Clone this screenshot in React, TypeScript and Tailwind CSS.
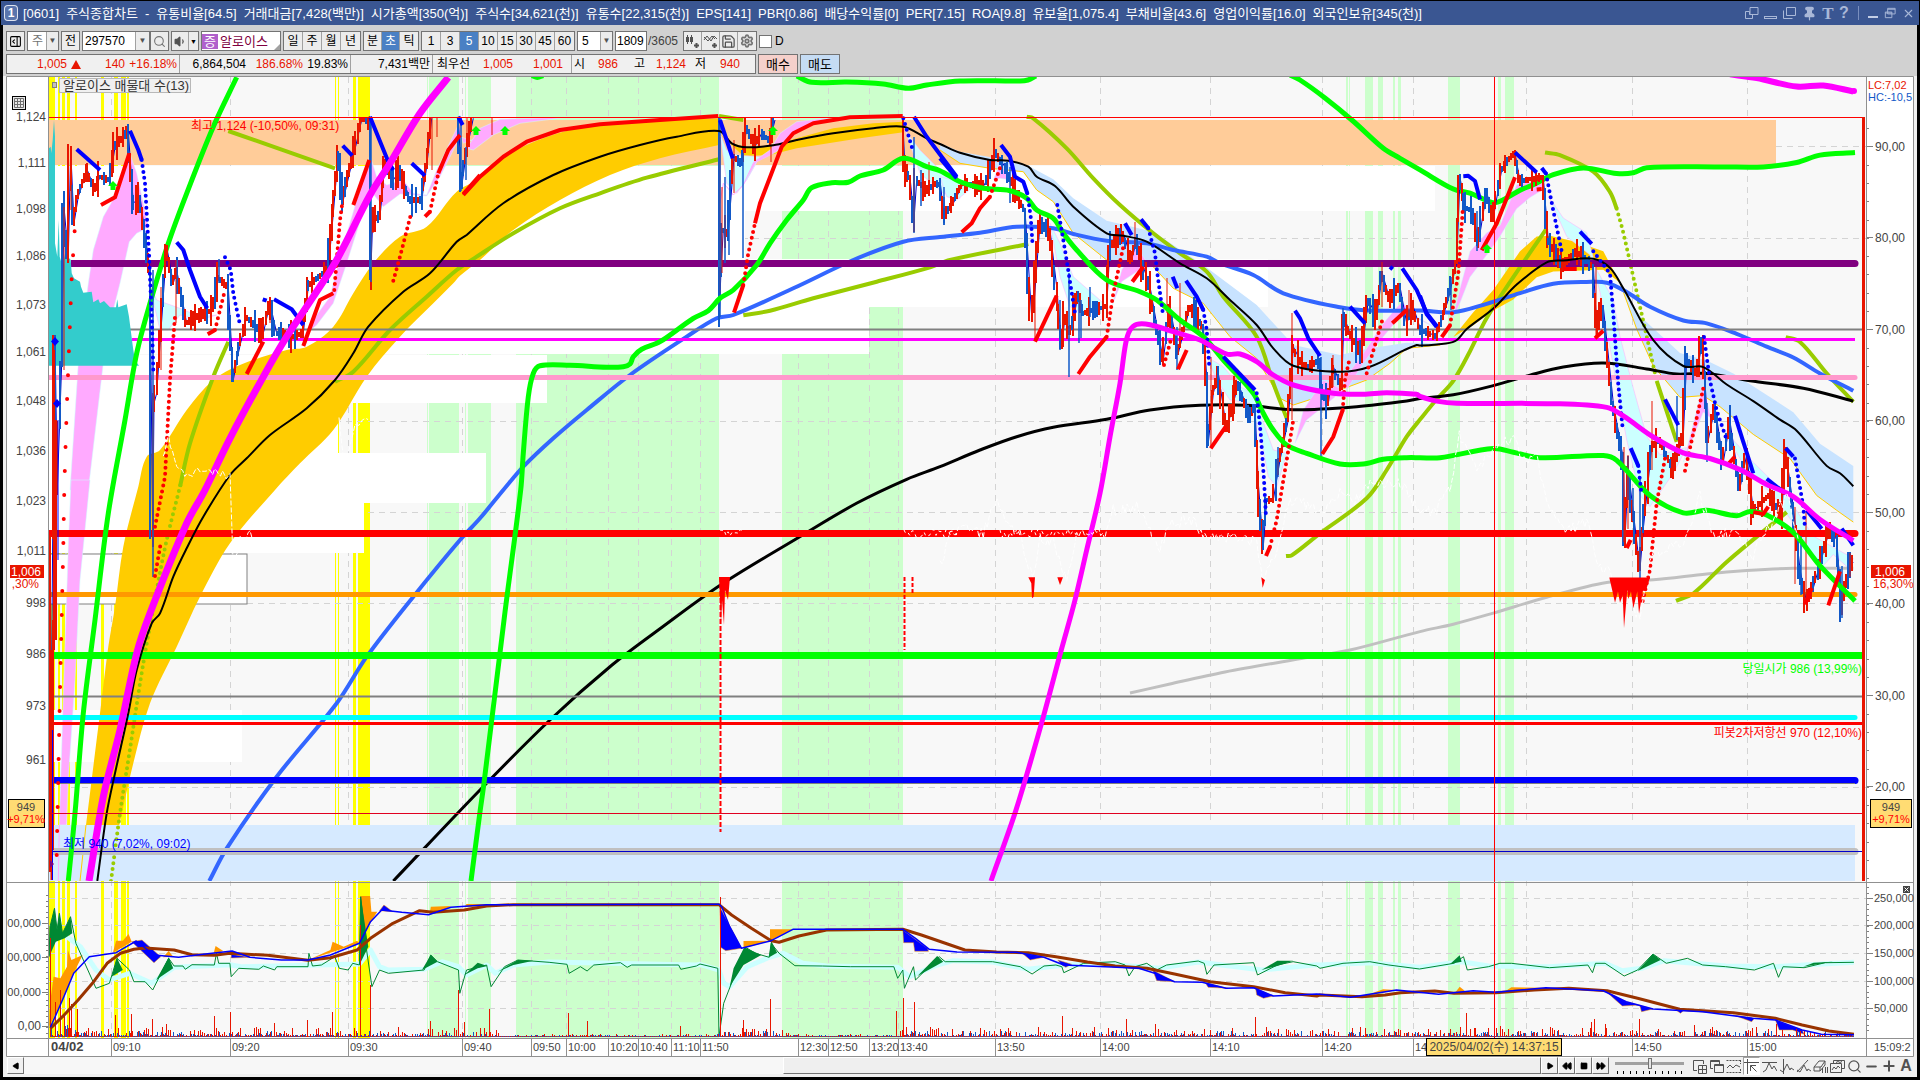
import type { ReactNode } from 'react';
import { Search, Volume1, Save, Settings, Pin, Minus, X, Plus, PanelRightOpen, Play, Rewind, FastForward, Square } from 'lucide-react';

type Tile = [number, number, number, number];

// origin x, origin y, units per px across, units per px down
const Z: Tile = [0, 0, 1, 1];
const A: Tile = [0, 70, 3, 3];
const B: Tile = [0, 480, 3, 3];
const C: Tile = [460, 70, 3, 3];
const D: Tile = [940, 100, 3, 3];
const E: Tile = [1420, 70, 3, 2.703];
const F: Tile = [0, 870, 2.24, 3];
const G: Tile = [700, 870, 2.529, 3];
const H: Tile = [1320, 800, 2.613, 3];

function nums(t: Tile, s: string) {
  return s.trim().split(' ').map((pair) => {
    const [x, y] = pair.split(',').map(Number);
    return [t[0] + x / t[2], t[1] + y / t[3]];
  });
}

function p(t: Tile, s: string) {
  return nums(t, s).map(([x, y]) => `${x.toFixed(1)},${y.toFixed(1)}`).join(' ') + ' ';
}

function random(seed: number) {
  let s = seed;
  return () => {
    s = (s * 16807) % 2147483647;
    return s / 2147483647;
  };
}

// curve through all points, handles scaled by the length of each segment
function smooth(d: string) {
  const pts = nums(Z, d);
  const dir = pts.map((_, i) => {
    const [ax, ay] = pts[Math.max(0, i - 1)];
    const [bx, by] = pts[Math.min(pts.length - 1, i + 1)];
    const len = Math.hypot(bx - ax, by - ay) || 1;
    return [(bx - ax) / len, (by - ay) / len];
  });
  let path = `M${pts[0][0]} ${pts[0][1]}`;
  for (let i = 1; i < pts.length; i++) {
    const [ax, ay] = pts[i - 1];
    const [bx, by] = pts[i];
    const k = Math.hypot(bx - ax, by - ay) / 3;
    const c = [ax + dir[i - 1][0] * k, ay + dir[i - 1][1] * k, bx - dir[i][0] * k, by - dir[i][1] * k, bx, by];
    path += `C${c.map((n) => n.toFixed(1)).join(' ')}`;
  }
  return path;
}

function Line({ d, c, w = 1, dash }: { d: string; c: string; w?: number; dash?: string }) {
  return (
    <polyline points={d} fill="none" stroke={c} strokeWidth={w} strokeDasharray={dash} strokeLinecap={dash === '0 6' || dash === '0 24' ? 'round' : 'butt'} strokeLinejoin="round" />
  );
}

function Curve({ d, c, w = 1, dash }: { d: string; c: string; w?: number; dash?: string }) {
  return <path d={smooth(d)} fill="none" stroke={c} strokeWidth={w} strokeDasharray={dash} strokeLinecap={dash ? 'round' : 'butt'} />;
}

const bands = {
  yellow: [[49, 6], [58, 2], [62, 3], [67, 3], [75, 2], [101, 3], [114, 4], [121, 5], [127, 2], [335, 1], [338, 1], [353, 3], [358, 12]],
  green: [[427, 1], [429, 30], [465, 1], [468, 23], [516, 203], [782, 121], [1346, 2], [1349, 1], [1365, 8], [1378, 5], [1393, 2], [1398, 3], [1448, 12], [1498, 3], [1505, 9]],
};

const profile = [[166, 45, 1386], [211, 48, 696], [259, 48, 1219], [307, 47, 820], [355, 48, 498], [403, 50, 289], [453, 50, 437], [503, 50, 315], [710, 52, 193]];

const times: [number, string][] = [
  [111, '09:10'], [230, '09:20'], [348, '09:30'], [462, '09:40'], [531, '09:50'], [566, '10:00'], [608, '10:20'],
  [638, '10:40'], [671, '11:10'], [700, '11:50'], [798, '12:30'], [828, '12:50'], [869, '13:20'], [898, '13:40'],
  [995, '13:50'], [1100, '14:00'], [1210, '14:10'], [1322, '14:20'], [1413, '14'], [1526, ''], [1632, '14:50'], [1747, '15:00'],
];

const prices: [number, string][] = [
  [117, '1,124'], [163, '1,111'], [209, '1,098'], [256, '1,086'], [305, '1,073'], [352, '1,061'], [401, '1,048'],
  [451, '1,036'], [501, '1,023'], [551, '1,011'], [603, '998'], [654, '986'], [706, '973'], [760, '961'],
];

const scores: [number, string][] = [
  [146, '90,00'], [237, '80,00'], [329, '70,00'], [420, '60,00'], [512, '50,00'], [603, '40,00'], [695, '30,00'], [786, '20,00'],
];

const levels: [number, string, number, number, number][] = [
  [263, '#800080', 7, 71, 1855], [329, '#808080', 2, 130, 1863], [339, '#ff00ff', 3, 132, 1855], [377, '#ff99cc', 5, 49, 1855],
  [533, '#ff0000', 7, 49, 1855], [594, '#ff9900', 5, 49, 1855], [655, '#00ff00', 7, 49, 1862], [696, '#808080', 2, 49, 1863],
  [717, '#00ffff', 5, 49, 1855], [723, '#ff0000', 3, 49, 1862], [780, '#0000ff', 7, 49, 1855], [783, '#808080', 1, 49, 1855],
  [851, '#c0c0c0', 7, 53, 1855],
];

const pinkClouds = [
  p(A, '210,1260 235,880 265,640 280,540 310,440 350,370 388,245 410,310 430,400 445,470 430,480 410,490 388,515 360,640 340,720 310,880 265,1260'),
  p(B, '213,0 270,0 240,300 225,600 205,900 200,1035 178,1035 190,650 205,200'),
  p(A, '920,790 950,735 990,680 1020,560 1110,255 1130,320 1160,345 1210,330 1240,370 1280,375 1310,300 1375,165 1390,220 1440,200 1440,220 1380,200 1320,320 1280,378 1200,372 1150,410 1110,360 1040,580 1000,700 950,765'),
  p(C, '20,235 60,175 120,148 320,142 180,160 100,195 40,240'),
  p(C, '860,330 880,275 930,240 960,190 1010,155 1110,143 1050,160 1000,195 950,245 890,275'),
  p(D, '515,620 545,510 590,440 630,500 590,515 545,545'),
  p(D, '1065,1030 1090,930 1150,840 1210,870 1150,920 1100,960'),
  p(D, '1210,840 1270,760 1330,670 1385,605 1430,650 1500,690 1440,660 1385,645 1330,710 1270,790 1220,870'),
  p(E, '95,680 120,590 150,490 200,440 240,420 290,310 360,295 375,320 330,345 290,375 240,450 200,500 150,560 120,630'),
  p(E, '790,1060 830,920 850,850 870,930 900,960 850,925'),
  p(D, '160,240 180,190 210,240 180,235'),
];

const cyanClouds = [
  p(A, '447,640 470,690 540,715 600,740 650,735 600,750 540,735 505,780 480,780'),
  p(C, '780,190 800,240 830,255 900,260 860,330 830,370 800,340'),
  p(C, '1335,180 1380,240 1440,300 1500,335 1500,385 1450,370 1380,310'),
  p(D, '0,230 60,245 100,260 50,300 20,290'),
  p(D, '330,370 360,430 400,530 480,600 500,620 430,640 390,620 360,530'),
  p(D, '800,770 850,800 900,860 940,880 960,940 1000,1050 1040,1060 1010,1160 985,1130 960,1000 930,910 870,900 830,840'),
  p(E, '385,340 430,400 500,440 530,540 580,620 600,720 640,860 680,990 720,1040 800,1020 760,1090 690,1180 660,1150 620,1000 580,800 540,600 510,500 440,450'),
  p(E, '900,960 1000,1060 1100,1150 1180,1260 1260,1300 1300,1320 1290,1350 1240,1310 1200,1350 1140,1250 1060,1150 980,1080'),
];

const goldUpper = p(B, '258,1035 300,700 325,500 345,380 370,200 415,20') +
  p(A, '440,1160 480,1140 560,1020 640,930 720,885 860,840 920,830 1000,770 1060,670 1120,580 1200,500 1280,470 1370,365 1440,325') +
  p(C, '100,280 200,225 330,180 500,155 777,145');
const goldLower = p(C, '777,225 600,265 450,315 300,390 160,480 60,570 0,617') +
  p(A, '1360,640 1300,700 1200,800 1100,920 1000,1080 900,1180 825,1260') +
  p(B, '690,190 600,350 530,500 450,670 400,850 358,1035');
const goldClouds = [
  p(C, '777,190 815,220 860,232 940,226 1010,205 1120,175 1240,160 1330,155 1330,187 1200,205 1010,235 930,255 850,258'),
  p(E, '100,722 160,655 220,595 300,490 350,450 390,448 470,465 550,490 600,575 550,540 400,545 350,560 280,620 220,650 160,690'),
];

const skyUpper = '0,130 60,155 200,180 270,200 340,238 400,295 500,362 640,395 790,495 950,615 1060,735 1200,765 1290,745 1400,728 1500,730 ';
const skyLower = '1500,735 1400,745 1350,790 1280,840 1200,870 1060,915 1020,895 950,775 870,710 790,610 700,565 630,490 500,480 400,400 340,305 290,270 250,215 150,205 60,190 0,150';
const skyLowerRight = '1300,1222 1250,1190 1190,1150 1110,1050 1000,985 900,910 850,880 780,885 700,800 650,700 600,575';

const green1 = p(B, '205,1203 225,1000 250,700 285,420 325,100') + p(A, '375,1050 410,850 450,700 505,520 560,370 640,170 710,22');
const green2 = p(C, '1010,18 1055,37 1160,36 1270,42 1345,55 1400,45 1500,33') + p(Z, '1020,81 1028,80 1036,76');
const green3 = p(Z, '1290,75 1300,80 1325,98 1353,121') + p(D, '1330,145 1380,175') + p(E, '0,270 100,322 150,333 215,358 240,355 300,325 340,310 400,283 490,265 590,280 640,278 680,264 900,262 1030,262 1130,250 1200,230 1305,223');
const green4 = p(B, '1413,1203 1440,995') + p(Z, '484,783 505,612') +
  p(C, '182,1260 190,1150 205,980 220,910 240,887 330,886 440,892 490,890 510,882 520,860 545,838 600,815 700,745 745,722 780,685 820,660 890,585 930,520 980,450 1030,390 1055,353 1115,338 1165,337 1200,318 1270,300 1330,265 1400,290') +
  p(D, '0,212 60,245 130,265 210,272 260,295 290,330 340,355 370,400 410,450 500,540 600,575 650,600 720,660 790,710 850,780 940,880 970,940 1000,990 1040,1035 1100,1060 1200,1092 1270,1092 1330,1078 1400,1073') +
  p(E, '0,1048 60,1048 220,1023 280,1033 360,1048 550,1042 590,1055 690,1150 790,1197 860,1190 950,1205 990,1193 1040,1203 1120,1250 1200,1340 1305,1435');

const black1 = p(B, '292,1203 320,1000 345,880 385,700 410,570 455,430 480,400 520,290 560,205 610,110') +
  p(A, '690,1215 740,1165 810,1095 920,1015 1005,930 1060,850 1105,770 1210,665 1290,610 1370,515 1400,495') +
  p(C, '20,495 130,400 280,315 420,260 540,225 650,200 777,183 815,220 860,232 940,226 1010,210 1120,190 1240,175 1330,170 1400,205') +
  p(D, '0,132 60,158 150,180 205,182 265,200 290,230 345,258 400,320 500,400 550,407 620,425 720,490 800,535 870,600 950,675 1000,745 1060,797 1200,815 1290,800 1390,752 1430,735') +
  p(E, '0,745 50,742 105,733 140,700 220,645 290,580 380,520 430,515 520,510 570,535 610,590 700,730 790,800 850,803 920,850 1000,895 1080,945 1130,975 1220,1070 1260,1090 1300,1125');
const black2 = p(B, '1180,1203 1440,930') + p(Z, '551,719 612,665 661,628 722,584 796,539 857,503') + p(C, '1340,1228') +
  p(D, '0,1100 120,1050 230,1010 340,982 500,958 630,930 780,916 920,916 1060,929 1250,920 1400,903') +
  p(E, '0,888 100,878 220,853 330,825 430,803 550,792 680,808 770,822 860,820 990,840 1150,860 1300,895');
const blueCurve = p(B, '628,1203 680,1105 830,890 1010,670 1100,530 1240,350 1380,180 1440,115') +
  p(C, '130,1260 190,1190 280,1105 380,1020 510,915 680,800 770,745 820,735 1000,655 1180,570 1330,515') +
  p(D, '0,411 120,398 230,380 340,385 400,402 500,422 620,430 700,450 800,470 840,490 940,525 1030,580 1200,622 1300,632') +
  p(E, '0,650 100,655 200,632 300,603 400,578 500,573 560,575 620,600 690,640 790,677 860,685 950,713 1040,748 1120,777 1200,820 1300,867');
const magenta1 = p(B, '267,1203 310,950 360,750 410,520 450,400 560,130') + p(A, '615,1260 690,1105 790,920 860,800 940,680 1010,570 1110,375 1170,280 1260,130 1345,22');
const magenta2 = p(Z, '991,881 1016,810 1041,725 1061,651') +
  p(D, '405,1500 440,1350 480,1180 510,1010 540,850 557,730 570,690 590,673 630,674 700,695 780,720 860,762 900,762 950,785 1000,825 1060,855 1180,880 1270,883 1340,878 1430,883') +
  p(E, '0,882 50,895 110,901 400,902 560,912 610,935 700,992 790,1035 870,1050 960,1080 1040,1120 1120,1153 1200,1215 1300,1272');
const silver = p(Z, '1130,693 1170,684 1225,672 1298,659 1350,650') + p(E, '0,1518 100,1498 220,1468 380,1425 560,1385 700,1378 860,1362 980,1353 1120,1347 1300,1347');

const olive = [
  p(A, '685,183 1005,295'),
  p(A, '540,1250 570,1120 640,920 685,815'),
  p(A, '1005,935 1060,905 1170,780 1280,680 1370,600') + p(C, '50,560 160,490 300,415 420,370 560,323 777,268'),
  p(C, '777,138 850,150'),
  p(C, '850,736 930,722 1060,685 1250,635 1410,592') + p(D, '30,480 265,432'),
  p(D, '260,50 280,55 380,145 460,235 540,315 640,400 720,460 800,515 850,590 950,710 1000,850 1040,955'),
  p(D, '1038,1368 1055,1366 1140,1300 1280,1195 1340,1110 1400,1010') + p(E, '0,945 50,890 100,840 150,760 200,670 280,560 380,428'),
  p(E, '375,223 420,230 520,275 570,330 590,375'),
  p(E, '710,840 770,1005'),
  p(E, '768,1435 820,1415 920,1330 1100,1195'),
  p(E, '1097,722 1140,735 1220,820 1300,897'),
];
const oliveDots = [p(B, '333,1203 360,1000 385,840 430,550 470,330 500,180 545,0'), p(E, '590,375 610,440 650,600 710,840')];

const blueRuns: [Tile, string[]][] = [
  [A, ['230,238 300,300', '390,182 415,240 425,270', '530,517 550,540 570,600 600,680 622,715', '788,688 800,692', '822,688 875,718 910,765', '1028,227 1057,257', '1110,140 1165,275 1180,300', '1235,280 1275,317', '1375,140 1388,165']],
  [C, ['780,150 818,265', '1362,140 1400,200 1490,320']],
  [D, ['0,175 50,235', '183,135 210,170 225,230 250,245 262,280', '555,370 575,405', '603,358 625,385', '698,530 712,565', '738,542 770,590 790,630', '850,770 945,870', '1065,632 1080,655 1105,715 1140,768', '1230,620 1275,670', '1350,500 1358,508', '1387,505 1430,570 1460,640 1490,678']],
  [E, ['0,610 20,660 50,695', '130,287 145,286 165,300 180,350', '285,223 350,277', '365,265 378,280', '480,437 515,470', '632,1022 655,1070', '735,890 775,960', '945,935 1000,1090', '1040,1105 1090,1140', '1097,1022 1120,1045', '1160,1190 1205,1240', '1265,1240 1300,1285']],
];
const blueDots: [Tile, string[]][] = [
  [A, ['425,270 435,340 440,430 447,550 455,740 460,900', '675,562 692,600 700,670 720,765']],
  [C, ['1330,145 1358,240']],
  [D, ['262,280 272,350 278,440', '352,315 375,450 405,640', '625,385 645,460 652,520 670,650', '790,630 800,690 808,800', '950,880 962,1000 972,1140 978,1250']],
  [E, ['378,280 400,380 425,490', '520,490 570,550 580,660 595,850 608,970', '655,1070 665,1150', '852,722 870,840 890,920 920,1000', '1125,1050 1150,1180 1155,1240']],
];
const redRuns: [Tile, string[]][] = [
  [A, ['303,405 345,382 388,250', '623,793 645,780', '740,912 790,815', '910,828 960,690 1000,670', '1060,405 1108,270', '1275,440 1290,425', '1315,310 1345,240 1380,195', '1390,372 1440,315']],
  [C, ['10,375 60,320 130,260 200,215 300,180 420,163 600,150 775,138', '822,728 850,645', '885,460 900,400 965,230 1000,190 1060,160 1170,142 1328,138']],
  [D, ['65,397 95,370 120,325 150,290', '285,725 350,587', '415,822 450,770 500,710', '577,545 610,500', '714,808 740,750', '812,1045 857,980', '978,1368 990,1340', '1147,1062 1180,1010 1208,930', '1357,670 1400,630']],
  [E, ['65,722 90,690', '185,487 230,415 285,290', '350,323 365,322', '430,538 470,538', '525,725 550,705', '620,1292 632,1270', '925,1065 945,1045', '1225,1447 1260,1355', '1000,1195 1030,1200 1045,1180', '1155,1445 1175,1400']],
];
const redDots: [Tile, string[]][] = [
  [A, ['465,1370 495,1220 510,930 525,740', '645,780 675,660', '1003,660 1020,450 1027,400', '1180,632 1200,560 1232,435', '1290,425 1315,310']],
  [B, ['465,288 482,190']],
  [C, ['850,645 865,550 885,460']],
  [D, ['150,290 183,195', '500,710 520,580 550,440', '672,795 695,710', '990,1340 1010,1260 1040,1080 1060,960', '1208,930 1215,840 1230,770', '1280,820 1330,650']],
  [E, ['90,690 115,550 128,380', '668,1435 690,1350 710,1170 735,1050', '795,1083 850,860']],
];

const trades: [Tile, string][] = [
  [A, '150,2400 158,1400 165,800 172,1260 185,880 192,410 205,560 212,240 222,460 235,380 262,300 285,360 300,320 330,330 345,230 385,185 400,400 420,380 450,600 458,1400 462,1000 470,970 500,530 520,640 530,600 560,760 590,740 640,720 655,620 685,650 700,930 715,850 740,740 790,790 810,700 830,790 880,800 910,790 925,650 960,620 985,600 1000,430 1015,250 1030,390 1060,260 1085,150 1110,140 1112,620 1118,450 1140,440 1155,280 1180,330 1200,300 1230,390 1265,390 1280,290 1295,145'],
  [A, '1375,140 1385,350 1400,240 1420,145'],
  [C, '777,142 778,740 783,600 790,480 805,490 822,260 845,280 850,250 860,170 885,230 905,190 930,210 945,150'],
  [C, '1328,142 1335,300 1350,320 1362,450 1370,330 1400,360 1430,340 1440,345'],
  [D, '0,240 12,350 40,310 70,250 130,260 150,220 168,155 200,210 230,280 255,330 275,650 283,600 300,370 330,390 350,560 365,740 375,650 390,700 400,660 415,580 430,640 500,620 510,440 550,400 575,480 590,420 610,500 630,560 655,700 670,780 690,620 715,760 750,620 790,680 800,830 805,1030 820,880 835,820 860,990 895,850 930,950 945,920 955,1150 970,1340 980,1200 1000,1200 1020,1080 1045,960 1060,740 1085,790 1110,800 1140,780 1145,870 1165,910 1180,800 1205,860 1212,650 1230,700 1265,760 1285,600 1310,650 1327,520 1350,600 1380,560 1400,670 1420,620 1445,700'],
  [E, '0,700 50,720 85,620 110,520 120,290 135,370 160,380 175,470 200,330 220,400 245,270 285,225 300,300 370,290 385,460 430,530 470,490 520,530 530,690 550,640 580,900 610,1050 615,1270 625,1080 660,1350 670,1240 695,1020 720,1000 760,1080 790,990 800,780 830,820 848,730 865,1000 885,910 910,1060 930,950 960,1130 980,1040 1000,1190 1050,1150 1085,1200 1097,1030 1120,1180 1140,1350 1160,1440 1180,1400 1230,1240 1250,1270 1265,1450 1290,1340 1300,1330'],
];

// single long wicks
const redWicks: [Tile, string][] = [
  [A, 'M192 410V900M212 240V420M482 650V900M528 570V760M810 690V760M1118 420V490M1295 145V300M1312 145V200M1402 145V240'],
  [C, 'M97 142V195M781 200V668M787 350V610M822 210V370M932 145V275M1408 275V350'],
  [D, 'M285 480V720M585 365V440M680 535V640M720 548V720M813 770V1040M1057 640V960M1180 765V860M1327 485V620M1408 570V650'],
  [E, 'M528 530V725M613 1020V1275M625 1040V1240M695 895V1080M708 970V1040M1126 1180V1390M1159 1195V1440M1290 1305V1370'],
];
const blueWicks: [Tile, string][] = [
  [A, 'M1112 145V635M458 600V1520M656 568V640M1237 390V440M1382 145V362M1397 230V330'],
  [C, 'M779 142V740M796 320V580M806 400V555M848 250V565M1363 200V488M1384 300V408M1453 380V465'],
  [D, 'M13 260V374M211 200V310M386 520V832M360 600V750M418 600V730M424 600V714M450 560V650M710 680V810M1142 770V1070M1210 625V720M1015 1040V1130'],
  [E, 'M660 1100V1420M772 880V1000M862 900V1060M640 1130V1220M1267 1340V1480M1143 1260V1420M172 380V488M92 560V650'],
];

function place(t: Tile, d: string) {
  return d.replace(/M(\d+) (\d+)V(\d+)/g, (_, x, a, b) => `M${Math.round(t[0] + x / t[2])} ${Math.round(t[1] + a / t[3])}V${Math.round(t[1] + b / t[3])}`);
}

function buildBars() {
  const rnd = random(77);
  let red = '';
  let blue = '';
  trades.forEach(([tile, s]) => {
    const pts = nums(tile, s);
    for (let i = 1; i < pts.length; i++) {
      const [x0, y0] = pts[i - 1];
      const [x1, y1] = pts[i];
      const steps = Math.max(1, Math.round(Math.abs(x1 - x0) / 2));
      const slope = Math.abs(y1 - y0) / steps;
      for (let k = 0; k < steps; k++) {
        const x = Math.round(x0 + ((x1 - x0) * k) / steps);
        const y = y0 + ((y1 - y0) * (k + 0.5)) / steps;
        const h = slope / 2 + 2 + rnd() ** 3 * 14;
        const bar = `M${x} ${Math.max(117, Math.round(y - h))}V${Math.round(Math.min(880, y + h))}`;
        if (y1 < y0 ? rnd() < 0.78 : rnd() < 0.45) red += bar;
        else blue += bar;
      }
    }
  });
  return { red, blue };
}

const spikes: [number, number][] = [
  [50, 938], [55, 1002], [60, 990], [69, 998], [71, 1004], [77, 1009], [115, 1015], [131, 1014], [152, 1019], [166, 1024], [214, 1016],
  [230, 1012], [274, 1023], [307, 1020], [332, 1012], [360, 925], [370, 985], [430, 1021], [458, 990], [464, 1022], [489, 1009], [568, 1013],
  [587, 1021], [680, 1026], [720, 897], [743, 1020], [770, 999], [896, 1011], [903, 998], [914, 1002], [930, 1027], [1062, 1016],
  [1126, 1019], [1155, 1024], [1255, 1017], [1365, 1028], [1466, 1013], [1475, 1028], [1500, 1026], [1591, 1022], [1594, 1019], [1605, 1024],
  [1639, 1019], [1694, 1025], [1776, 1024],
];

function buildVolume() {
  const rnd = random(4021);
  let red = '';
  let blue = '';
  for (let x = 50; x < 1854; x += 2) {
    const quiet = (x > 500 && x < 715) || (x > 790 && x < 895);
    const busy = x < 75 ? 22 : quiet ? 2 : 9;
    red += `M${x}.5 1037V${(1036 - rnd() ** 3 * busy).toFixed(0)}`;
    blue += `M${x + 1}.5 1037V${(1036 - rnd() ** 3 * busy * 0.6).toFixed(0)}`;
  }
  spikes.forEach(([x, y]) => { red += `M${x}.5 1037V${y}`; });
  return { red, blue };
}

// adds noise between the anchors of a line
function rough(d: string, size: number, seed: number) {
  const rnd = random(seed);
  const pts = nums(Z, d);
  const out: string[] = [];
  for (let i = 1; i < pts.length; i++) {
    const [x0, y0] = pts[i - 1];
    const [x1, y1] = pts[i];
    const steps = Math.max(1, Math.round(Math.abs(x1 - x0) / 2));
    for (let k = 0; k < steps; k++) {
      out.push(`${(x0 + ((x1 - x0) * k) / steps).toFixed(1)},${(y0 + ((y1 - y0) * k) / steps + (rnd() - 0.5) * size).toFixed(1)}`);
    }
  }
  return out.join(' ');
}

const brown = p(F, '113,475 140,440 175,390 210,335 240,280 270,250 300,238 325,234 390,240 430,254 480,256 515,250 600,256 690,271 740,263 800,240 830,205 880,160 940,122 970,127 1040,120 1090,108 1150,104 1560,104') +
  p(G, '0,104 48,104 80,135 130,175 180,212 200,217 250,198 320,180 513,178 560,195 670,240 750,246 830,248 900,260 980,276 1050,288 1130,295 1200,312 1290,335 1400,350 1480,368 1560,378') +
  p(H, '0,585 110,590 170,585 210,578 300,573 350,580 460,578 560,570 650,565 750,572 830,595 940,628 1080,638 1190,655 1260,675 1330,693 1395,703');
const flow = p(F, '113,472 140,390 165,310 200,260 260,248 305,213 345,255 400,262 460,252 520,243 560,262 630,270 690,270 740,255 805,220 830,155 855,120 900,127 960,134 1010,112 1090,104 1560,103') +
  p(G, '0,103 48,103 55,110 75,170 105,235 180,212 235,178 513,178 545,205 580,238 650,246 800,247 870,262 920,285 1040,291 1110,295 1150,310 1200,335 1270,337 1330,355 1400,353 1450,378 1560,372') +
  p(H, '0,583 80,592 200,570 310,583 400,572 460,577 590,563 740,572 800,605 870,627 1000,635 1130,655 1190,660 1260,690 1310,703 1395,704');
const pulse = p(F, '110,260 112,170 122,115 128,180 133,130 140,190 158,140 170,220 215,355 245,340 262,265 290,300 300,335 325,335 342,360 378,265 390,288 410,288 415,298 430,284 480,285 485,250 490,280 515,280 518,320 535,295 580,298 590,288 615,300 620,290 690,290 692,250 700,288 720,285 750,260 760,295 780,300 790,280 805,285 808,80 820,230 833,350 850,300 870,310 950,300 965,255 980,275 1027,300 1030,370 1045,300 1090,285 1100,350 1130,290 1160,270 1230,277 1270,283 1275,310 1300,290 1315,303 1330,285 1390,278 1405,292 1415,285 1520,285 1525,298 1560,288') +
  p(G, '0,282 45,295 48,500 60,400 115,232 140,250 175,262 180,220 200,250 240,287 310,288 380,290 490,290 500,325 513,300 517,355 540,290 545,330 605,260 620,275 740,275 810,290 840,312 870,288 900,285 915,290 920,308 970,280 1050,275 1075,285 1085,318 1100,290 1130,280 1155,300 1180,285 1260,273 1275,280 1282,313 1300,285 1400,278 1410,315 1460,285 1500,275 1560,288') +
  p(H, '0,505 60,490 130,485 180,495 260,507 350,490 375,470 385,510 440,500 470,490 500,490 600,503 700,495 712,518 720,490 745,490 795,528 830,510 870,462 905,490 960,475 1000,495 1060,500 1135,510 1185,490 1198,532 1210,500 1265,503 1320,488 1395,487');
const pulseBase = p(F, '150,200 180,230 215,300 245,330 290,310 340,340 390,292 515,284 540,290 690,286 805,282 830,240 850,290 870,300 950,298 990,275 1027,290 1045,315 1090,285 1110,310 1150,285 1230,276 1560,285') +
  p(G, '0,283 48,300 60,340 75,350 120,290 175,262 210,250 260,280 320,288 500,292 530,320 600,285 640,272 740,276 830,298 900,288 1000,280 1160,295 1260,276 1420,300 1560,284') +
  p(H, '0,495 130,488 260,502 370,485 440,498 600,500 745,490 790,512 840,505 900,482 1060,498 1190,500 1395,487');

const orangeFills = [
  p(F, '110,470 112,400 120,320 135,325 150,290 152,240 160,270 185,255 165,310 140,390'), p(F, '253,248 260,212 275,212 288,192 295,215'),
  p(F, '805,220 808,78 829,78 832,125 845,125 820,180'), p(F, '962,134 965,110 1010,108 1000,116'), p(F, '478,252 483,228 500,243'),
  p(F, '690,270 740,240 745,215 770,230 800,212 805,220'), p(F, '365,262 378,243 388,260'), p(F, '1040,112 1045,102 1090,102 1090,108'),
  p(G, '110,235 110,213 180,212'), p(G, '177,212 177,178 235,178'), p(H, '110,590 165,568 200,570'), p(H, '350,583 365,560 378,572'), p(H, '480,577 500,562 590,563'),
];
const blueFills = [
  p(F, '295,215 318,210 360,260 345,278'), p(F, '518,253 518,264 560,262'), p(F, '850,122 860,105 880,125'),
  p(G, '50,110 105,235 65,242 52,232'), p(G, '513,180 575,235 578,244 543,244 540,218 515,218'), p(G, '1405,355 1450,378 1425,385 1408,375'),
  p(G, '1145,300 1200,335 1155,332'), p(G, '1278,338 1335,355 1285,352'), p(G, '905,270 940,283 925,292 915,285'), p(G, '815,250 870,262 835,270'),
  p(H, '745,572 800,605 870,627 840,635 835,615 790,618'), p(H, '1190,660 1260,690 1265,703 1235,690 1200,690'), p(H, '930,630 950,632 942,640'), p(H, '1080,645 1135,655 1128,665'),
];
const greenFills = [
  p(F, '110,260 112,170 122,115 128,180 133,130 140,190 158,140 162,190 145,205 125,215'), p(F, '378,262 350,330 360,320 388,295'), p(F, '1115,305 1160,270 1195,272 1150,285'),
  p(F, '1040,315 1070,278 1092,288 1070,295'), p(F, '805,285 808,80 825,230'), p(F, '945,300 965,255 980,275'), p(F, '250,320 262,265 275,300'),
  p(G, '112,232 155,255 110,285 75,350 85,295'), p(G, '550,318 600,258 615,275'), p(G, '175,262 180,212 195,248'), p(G, '1420,300 1460,272 1500,272 1460,288'),
  p(H, '830,513 870,462 890,480'), p(H, '340,492 365,466 370,485'), p(H, '1262,500 1290,488 1340,485 1300,493'),
];

const whiteLeft = p(A, '490,1170 505,1100 530,1190 560,1220 600,1200 650,1210 690,1220 700,1490 720,1410 750,1390 800,1450');
const whiteEdge = p(Z, '339,420 345,470 355,425 370,418');
const whiteRight = p(D, '0,1400 30,1300 80,1290 130,1300 165,1200 200,1270 240,1300 278,1440 300,1310 340,1330 380,1440 410,1310 500,1300 520,1230 590,1220 630,1290 660,1350 690,1270 760,1260 800,1320 900,1310 950,1330 968,1440 1000,1380 1050,1200 1150,1230 1200,1170 1250,1200 1290,1150 1380,1150 1430,1220') +
  p(E, '0,1190 50,1190 90,1130 118,990 170,1080 230,1020 280,990 300,1045 350,1050 385,1180 430,1250 500,1220 530,1330 570,1360 660,1480 690,1310 790,1280 840,1150 880,1260 940,1250 1000,1310 1100,1150 1140,1280');

function Runs({ data, c, dash }: { data: [Tile, string[]][]; c: string; dash?: string }) {
  return <>{data.flatMap(([t, list]) => list.map((s) => <Line key={`${t[0]}-${s}`} d={p(t, s)} c={c} w={4} dash={dash} />))}</>;
}

function Chart() {
  const bars = buildBars();
  const volume = buildVolume();
  return (
    <svg viewBox="3 76 1914 981" preserveAspectRatio="none" className="block h-full w-full" role="img" aria-label="알로이스 5초 차트">
      <defs>
        <clipPath id="main"><rect x="49" y="77" width="1816" height="804" /></clipPath>
      </defs>
      <rect x="3" y="76" width="1914" height="981" fill="#f0f0f0" />
      <rect x="7" y="77" width="1906" height="979" fill="#fff" />
      <rect x="49" y="77" width="1817" height="961" fill="#f8f8f8" />

      {bands.yellow.map(([x, w]) => <rect key={x} x={x} y="77" width={w} height="961" fill="#ffff00" />)}
      {bands.green.map(([x, w]) => <rect key={x} x={x} y="77" width={w} height="961" fill="#ccffcc" />)}

      {/* grid */}
      {times.map(([x]) => <path key={x} d={`M${x}.5 77V1038`} stroke="#d4d4d4" strokeDasharray="6 5" />)}
      {[146, 238, 421, 512, 603, 787, 898, 925, 953, 981, 1008].map((y) => <path key={y} d={`M49 ${y}.5H1866`} stroke="#d4d4d4" strokeDasharray="6 5" />)}

      <g clipPath="url(#main)">
        {profile.map(([y, h, w]) => <rect key={y} x="49" y={y} width={w} height={h} fill="#fff" />)}
        <rect x="49" y="120" width="1727" height="45" fill="#ffcc99" />
        <rect x="49" y="554" width="198" height="50" fill="#fff" stroke="#808080" />
        <rect x="49" y="825" width="1806" height="56" fill="#d6eaff" />

        <path d={`${smooth(goldUpper)}L${smooth(goldLower).slice(1)}Z`} fill="#ffcc00" />
        {goldClouds.map((d) => <polygon key={d} points={d} fill="#ffcc00" />)}
        <polygon points={p(D, skyUpper + skyLower)} fill="#c8e3ff" />
        <Line d={p(D, skyLower)} c="#ffcc00" />
        <polygon points={p(E, '590,560 660,665 780,765 860,785 940,820 1120,925 1200,1010 1300,1070 ' + skyLowerRight)} fill="#c8e3ff" />
        <Line d={p(E, skyLowerRight)} c="#ffcc00" />
        <Line d={p(B, '258,1035 240,1203')} c="#ffcc00" />
        {cyanClouds.map((d) => <polygon key={d} points={d} fill="#ccffff" stroke="#ffaaff" strokeWidth="0.5" />)}
        {pinkClouds.map((d) => <polygon key={d} points={d} fill="#ffaaff" stroke="#ccffff" strokeWidth="0.5" />)}
        <Line d={p(C, '780,400 790,340 800,350 820,375 850,345 880,280 940,250')} c="#ffaaff" />
        <Line d={p(B, '178,1035 175,1203')} c="#ffaaff" />

        <Curve d={silver} c="#c0c0c0" w={3} />
        {olive.map((d) => <Curve key={d} d={d} c="#99cc00" w={4} />)}
        {oliveDots.map((d) => <Curve key={d} d={d} c="#99cc00" w={4} dash="0 6" />)}
        <Curve d={blueCurve} c="#3366ff" w={4} />
        <Curve d={black2} c="#000" w={3} />

        {levels.map(([y, c, w, x0, x1]) => (
          <g key={y}>
            <path d={`M${x0} ${y + 0.5}H${x1}`} stroke={c} strokeWidth={w} />
            {x1 === 1855 && w > 3 && <circle cx={x1} cy={y + 0.5} r={w / 2} fill={c} />}
          </g>
        ))}
        <path d="M49 851.5H1863" stroke="#0000cc" />

        <polygon fill="#33cccc" points={p(A, '147,235 152,230 154,250 158,210 162,150 165,200 165,520 172,560 176,450 179,560 188,590 195,550 212,570 215,610 222,625 240,635 243,650 250,668 275,665 280,697 295,688 300,700 312,693 330,712 348,712 352,688 355,712 380,703 387,740 392,780 400,840 405,870 417,887 147,887')} />

        <Curve d={green1} c="#00ff00" w={5} />
        <Curve d={green2} c="#00ff00" w={5} />
        <Curve d={green3} c="#00ff00" w={5} />
        <Curve d={p(C, '215,18 232,24 250,18')} c="#00ff00" w={4} />

        {trades.map(([t, s]) => <Line key={s} d={p(t, s)} c="#0000cc" />)}
        <path d={bars.red} stroke="#e81500" strokeWidth="2" />
        <path d={bars.blue} stroke="#1259c8" strokeWidth="2" />
        {redWicks.map(([t, d]) => <path key={d} d={place(t, d)} stroke="#e81500" />)}
        {blueWicks.map(([t, d]) => <path key={d} d={place(t, d)} stroke="#1259c8" strokeWidth="1.5" />)}
        <path d="M54 350V650M56 420V640" stroke="#e81500" strokeWidth="2" />
        <path d="M51.500 650V880M53 620V850" stroke="#e81500" strokeWidth="2" />
        <path d="M58 420V560M52.500 730V880" stroke="#0000ff" />

        <Curve d={black1} c="#000" w={2} />
        <Curve d={green4} c="#00ff00" w={5} />
        <Runs data={blueRuns} c="#0000ff" />
        <Runs data={blueDots} c="#0000ff" dash="0 6" />
        <Runs data={redRuns} c="#ff0000" />
        <Runs data={redDots} c="#ff0000" dash="0 6" />
        <Line d={p(B, '170,1125 180,630 190,200 192,70') + p(A, '195,1180 201,995 215,620 228,420')} c="#ff0000" w={4} dash="0 24" />
        <Curve d={magenta1} c="#ff00ff" w={7} />
        <Curve d={magenta2} c="#ff00ff" w={5} />
        <Curve d={p(E, '930,12 1010,22 1130,45 1210,42 1300,58')} c="#ff00ff" w={6} />
        <circle cx="1854" cy="91" r="3" fill="#ff00ff" />
        <Line d={rough(whiteLeft, 8, 11)} c="#fff" dash="5 2" />
        <Line d={rough(whiteEdge, 5, 5)} c="#fff" dash="5 2" />
        <Line d={rough(whiteRight, 12, 29)} c="#fff" dash="5 2" />
        <Line d={rough('1000,534 1080,532', 8, 15)} c="#fff" dash="3 4" />
        <Line d={rough('720,534 744,533', 8, 8)} c="#fff" dash="3 3" />
        <Line d={rough('904,534 960,533', 8, 19)} c="#fff" dash="3 4" />

        {/* markers hanging below the 1,010 level */}
        <polygon fill="#ff0000" points="719,577 730,577 728,600 725,590 724,625 722,600 721,625" />
        <path d="M720.5 577V832" stroke="#ff0000" strokeWidth="2" strokeDasharray="5 2" />
        <path d="M904.5 577V650" stroke="#ff0000" strokeWidth="2" strokeDasharray="4 2" />
        <path d="M912.5 577V594" stroke="#ff0000" strokeWidth="2" strokeDasharray="4 2" />
        <polygon fill="#ff0000" points={p(D, '265,1432 285,1432 281,1490 276,1495 274,1450')} />
        <polygon fill="#ff0000" points={p(D, '352,1432 369,1432 360,1455')} />
        <polygon fill="#ff0000" points={p(D, '964,1432 975,1440 968,1463')} />
        <polygon fill="#ff0000" points={p(E, '568,1372 690,1372 680,1400 668,1410 657,1470 652,1410 640,1455 633,1410 625,1430 622,1405 612,1508 608,1420 600,1440 594,1410 585,1440 575,1400')} />

        <path d="M49 117.5H1863" stroke="#ff0000" />
        <path d="M49 813.5H1863" stroke="#e00020" />
        <path d="M1863.5 117V881" stroke="#e81500" strokeWidth="3" />
        {[[113, 185], [476, 130], [505, 130], [773, 130], [1487, 248]].map(([x, y]) => (
          <path key={x} d={`M${x} ${y - 4}l5 5h-2.500v4h-5v-4h-2.500z`} fill="#00ff00" />
        ))}
        <path d="M55 337l4 4.500-4 4.500-4-4.500zM57 399l4 4.500-4 4.500-4-4.500z" fill="#0000ff" />
        <path d="M50 860l4 4-4 4z" fill="#800080" />
      </g>

      <g fontSize="12">
        <text x="191" y="130" fill="#ff0000">최고 1,124 (-10,50%, 09:31)</text>
        <text x="63" y="848" fill="#0000ff">최저 940 (7,02%, 09:02)</text>
        <text x="1862" y="673" fill="#00ff00" textAnchor="end">당일시가 986 (13,99%)</text>
        <text x="1862" y="737" fill="#ff0000" textAnchor="end">피봇2차저항선 970 (12,10%)</text>
      </g>

      {/* sub chart */}
      <Line d={pulseBase} c="#ccffff" w={5} />
      {orangeFills.map((d) => <polygon key={d} points={d} fill="#ff9900" />)}
      {blueFills.map((d) => <polygon key={d} points={d} fill="#0000ff" stroke="#ff9900" strokeWidth="0.5" />)}
      <Line d={pulse} c="#008833" />
      {greenFills.map((d) => <polygon key={d} points={d} fill="#008833" />)}
      <path d={volume.blue} stroke="#1259c8" />
      <path d={volume.red} stroke="#e81500" />
      <Line d={brown} c="#993300" w={3} />
      <Line d={flow} c="#0000ff" w={1.5} />

      <path d="M1494.500 77V1038" stroke="#ff0000" />

      {/* frame lines */}
      <path d="M6.500 76.500H1913.500V1056.500H6.500zM7 882.500H1913M7 1038.500H1913M48.500 77V1056M1866.500 77V1056" fill="none" stroke="#909090" />
      {times.map(([x]) => <path key={x} d={`M${x}.5 1038V1056`} stroke="#909090" />)}
      {Array.from({ length: 42 }, (_, i) => 128 + i * 18.3).map((y) => <path key={y} d={`M1867 ${Math.round(y)}.5h2`} stroke="#808080" />)}
      {scores.map(([y]) => <path key={y} d={`M1867 ${y}.5h6`} stroke="#808080" />)}
      {Array.from({ length: 27 }, (_, i) => Math.round(887 + i * 5.5)).map((y) => <path key={y} d={`M1867 ${y}.5h2M46 ${y + 8}.5h2`} stroke="#808080" />)}
      {[898, 925, 953, 981, 1008].map((y) => <path key={y} d={`M1867 ${y}.5h6`} stroke="#808080" />)}
      {[923, 957, 992, 1026].map((y) => <path key={y} d={`M42 ${y}.5h6`} stroke="#808080" />)}

      <g fill="#444" fontSize="12">
        {prices.map(([y, t]) => <text key={t} x="46" y={y + 4} textAnchor="end">{t}</text>)}
        {scores.map(([y, t]) => <text key={t} x="1875" y={y + 5}>{t}</text>)}
        <text x="41" y="1030" textAnchor="end">0,00</text>
        <text x="51" y="1051" fontWeight="bold" fontSize="13">04/02</text>
        <rect x="10" y="565" width="34" height="13" fill="#e81500" />
        <text x="41" y="576" fill="#fff" textAnchor="end">1,006</text>
        <rect x="1871" y="565" width="40" height="13" fill="#e81500" />
        <text x="1875" y="576" fill="#fff">1,006</text>
        <text x="39" y="588" fill="#e81500" textAnchor="end">,30%</text>
        <text x="1873" y="588" fill="#e81500">16,30%</text>
      </g>

      <g fill="#444" fontSize="11">
        {['250,000', '200,000', '150,000', '100,000', '50,000'].map((t, i) => <text key={t} x="1874" y={[902, 929, 957, 985, 1012][i]}>{t}</text>)}
        {[927, 961, 996].map((y) => <text key={y} x="41" y={y} textAnchor="end">00,000</text>)}
        {times.map(([x, t]) => <text key={x} x={x + 2} y="1051">{t}</text>)}
        <text x="1874" y="1051">15:09:2</text>
        <text x="1868" y="89" fill="#e81500">LC:7,02</text>
        <text x="1868" y="101" fill="#1259c8">HC:-10,5</text>
        <rect x="8.5" y="799.5" width="36" height="28" fill="#ffdc73" stroke="#000" />
        <text x="26" y="811" textAnchor="middle">949</text>
        <text x="26" y="823" fill="#ff0000" textAnchor="middle">+9,71%</text>
        <rect x="1870.5" y="799.5" width="41" height="28" fill="#ffdc73" stroke="#000" />
        <text x="1891" y="811" textAnchor="middle">949</text>
        <text x="1891" y="823" fill="#ff0000" textAnchor="middle">+9,71%</text>
      </g>
      <rect x="1426.5" y="1038.5" width="135" height="17" fill="#ffdc73" stroke="#000" />
      <text x="1494" y="1051" fontSize="12" fill="#444" textAnchor="middle">2025/04/02(수) 14:37:15</text>

      <rect x="52.5" y="82.5" width="4" height="5" fill="#c0c0c0" stroke="#808080" />
      <rect x="59.5" y="78.5" width="131" height="14" fill="#f0f0f0" stroke="#b8b8b8" />
      <text x="63" y="90" fontSize="13" fill="#333">알로이스 매물대 수(13)</text>
      <rect x="12.5" y="96.5" width="13" height="13" fill="#e8e8e8" stroke="#000" />
      <path d="M14.500 98.500h9v9h-9zM14.500 101.500h9M14.500 104.500h9M17.500 98.500v9M20.500 98.500v9" fill="none" stroke="#707070" />
      <rect x="1903" y="886" width="7" height="7" fill="#444" />
      <path d="M1904.500 887.500l4 4m0-4l-4 4" stroke="#fff" />
    </svg>
  );
}

function Glyph({ d, w = 15, fill = 'none', children }: { d: string; w?: number; fill?: string; children?: ReactNode }) {
  return (
    <svg width={w} height={w} viewBox="0 0 15 15" fill={fill} stroke="currentColor" aria-hidden="true">
      <path d={d} />
      {children}
    </svg>
  );
}

function ToolButton({ label, active, className = 'w-[19px]', children }: { label: string; active?: boolean; className?: string; children?: ReactNode }) {
  return (
    <button
      aria-label={label}
      className={`flex h-[18px] shrink-0 items-center justify-center border-r border-neutral-400 last:border-r-0 ${className} ${active ? 'bg-[#4a80c4] text-white' : 'bg-[#ececec] text-black'}`}
    >
      {children ?? label}
    </button>
  );
}

function Group({ children }: { children: ReactNode }) {
  return <div className="flex h-[20px] shrink-0 items-center border border-neutral-500">{children}</div>;
}

function Combo({ label, value, className, tone = 'text-black' }: { label: string; value: string; className: string; tone?: string }) {
  return (
    <div className={`relative flex h-[20px] shrink-0 border border-neutral-500 bg-white ${className}`}>
      <select aria-label={label} className={`w-full appearance-none bg-transparent pl-1 outline-none ${tone}`}>
        <option>{value}</option>
      </select>
      <span className="pointer-events-none absolute right-0 flex h-[18px] w-[12px] items-center justify-center border-l border-neutral-400 bg-[#ececec] text-[8px] text-neutral-600">▼</span>
    </div>
  );
}

const titleParts = [
  '[0601]', '주식종합차트', '-', '유통비율[64.5]', '거래대금[7,428(백만)]', '시가총액[350(억)]', '주식수[34,621(천)]', '유통수[22,315(천)]',
  'EPS[141]', 'PBR[0.86]', '배당수익률[0]', 'PER[7.15]', 'ROA[9.8]', '유보율[1,075.4]', '부채비율[43.6]', '영업이익률[16.0]', '외국인보유[345(천)]',
];

function TitleBar() {
  return (
    <header className="mx-px flex h-[24px] shrink-0 items-center bg-[#3a5692] pl-[3px] pr-1 text-white">
      <span className="mr-[5px] flex h-[16px] w-[14px] items-center justify-center rounded-sm border border-white/80 bg-[#5a75ad] font-bold">1</span>
      <h1 className="flex gap-[7px] whitespace-nowrap text-[13px]">
        {titleParts.map((t) => <span key={t}>{t}</span>)}
      </h1>
      <div className="ml-auto flex items-center gap-[5px] text-[#a9b8d8]">
        <button aria-label="분리"><Glyph d="M6 1.500h8v7H6zM1.500 5.500h4v3h3v4h-7z" /></button>
        <button aria-label="접기" className="pt-2"><span className="block h-[3px] w-[13px] border border-[#a9b8d8]" /></button>
        <button aria-label="복사"><Glyph d="M4.500 1.500h9v8h-9zM1.500 4.500v8h9" /></button>
        <button aria-label="고정"><Pin size={15} fill="currentColor" /></button>
        <button aria-label="글꼴" className="w-[12px] font-['Liberation_Serif',serif] text-[17px] font-bold">T</button>
        <button aria-label="도움말" className="w-[10px] text-[16px] font-bold">?</button>
        <span className="ml-1 h-[14px] w-px bg-[#7a8fbe]" />
        <button aria-label="최소화" className="pt-2 pl-1"><span className="block h-[2px] w-[10px] bg-[#c3cee6]" /></button>
        <button aria-label="복원"><Glyph d="M5 2.500h8v6H5zM2.500 6.500h7v6h-7zM5 3.500h8M2.500 7.500h7" w={14} /></button>
        <button aria-label="닫기"><X size={13} /></button>
      </div>
    </header>
  );
}

function Toolbar() {
  return (
    <div className="flex h-[20px] items-center gap-[2px]">
      <Group><ToolButton label="패널" className="w-[17px]"><PanelRightOpen size={13} /></ToolButton></Group>
      <Combo label="종류" value="주" className="w-[32px]" tone="text-neutral-500" />
      <Group><ToolButton label="전" className="w-[17px]" /></Group>
      <div className="flex">
        <div className="flex h-[20px] w-[68px] border border-neutral-500 bg-white">
          <input aria-label="종목코드" defaultValue="297570" className="w-[52px] bg-transparent pl-[2px] outline-none" />
          <button aria-label="종목 목록" className="flex w-[14px] items-center justify-center border-l border-neutral-400 bg-[#ececec] text-[8px] text-neutral-600">▼</button>
        </div>
        <Group><ToolButton label="검색" className="w-[17px]"><Search size={13} className="text-neutral-500" /></ToolButton></Group>
      </div>
      <Group>
        <ToolButton label="소리" className="w-[17px]"><Volume1 size={13} fill="currentColor" className="text-neutral-600" /></ToolButton>
        <ToolButton label="소리 설정" className="w-[9px] text-[7px]">▼</ToolButton>
      </Group>
      <div className="flex h-[20px] w-[80px] items-center border border-neutral-500 bg-white text-[13px]">
        <span className="flex h-[15px] w-[16px] items-center justify-center bg-[#b060cc] text-white">증</span>
        <span className="pl-[2px] text-[#800040]">알로이스</span>
        <span className="ml-auto self-end border-b-[6px] border-l-[6px] border-b-neutral-400 border-l-transparent" />
      </div>
      <Group>{['일', '주', '월', '년'].map((t) => <ToolButton key={t} label={t} />)}</Group>
      <Group>{['분', '초', '틱'].map((t) => <ToolButton key={t} label={t} active={t === '초'} className="w-[18px]" />)}</Group>
      <Group>{['1', '3', '5', '10', '15', '30', '45', '60'].map((t) => <ToolButton key={t} label={t} active={t === '5'} />)}</Group>
      <Combo label="간격" value="5" className="w-[36px]" />
      <div className="flex items-center">
        <input aria-label="봉 개수" defaultValue="1809" className="h-[20px] w-[32px] border border-neutral-500 bg-white pl-px outline-none" />
        <span className="w-[34px] pl-px text-neutral-700">/3605</span>
      </div>
      <Group>
        <ToolButton label="봉 추가" className="w-[18px]">
          <span className="text-neutral-600"><Glyph d="M2.500 1v9M6.500 1v9" fill="currentColor"><path d="M1 3h3v5H1zM5 3h3v5H5z" stroke="none" /><path d="M11.500 9v5M9 11.500h5" strokeWidth="2" /></Glyph></span>
        </ToolButton>
        <ToolButton label="지표 추가" className="w-[18px]">
          <span className="text-neutral-600"><Glyph d="M1 6l3-4 4 5 3-5 3 3M1 3l4 4 4-5 3 3"><path d="M11.500 9v5M9 11.500h5" strokeWidth="2" /></Glyph></span>
        </ToolButton>
        <ToolButton label="저장" className="w-[18px]"><Save size={15} className="text-neutral-600" /></ToolButton>
        <ToolButton label="설정" className="w-[18px]"><Settings size={14} strokeWidth={3} className="text-neutral-500" /></ToolButton>
      </Group>
      <label className="flex items-center gap-[3px]">
        <input type="checkbox" className="h-[13px] w-[13px] appearance-none border border-neutral-500 bg-white" />D
      </label>
    </div>
  );
}

function QuoteBar() {
  return (
    <div className="mt-[3px] flex h-[20px] items-center gap-[2px]">
      <div className="flex h-[20px] w-[750px] items-center border border-neutral-500 bg-[#f0f0f0] text-right text-[#e81500]">
        <span className="w-[60px]">1,005</span>
        <span className="flex w-[14px] justify-end"><svg width="10" height="9" viewBox="0 0 10 9" fill="currentColor"><path d="M5 0l5 9H0z" /></svg></span>
        <span className="w-[44px]">140</span>
        <span className="w-[52px]">+16.18%</span>
        <span className="ml-[2px] h-full w-px bg-neutral-400" />
        <span className="w-[66px] text-black">6,864,504</span>
        <span className="w-[57px]">186.68%</span>
        <span className="w-[45px] text-black">19.83%</span>
        <span className="ml-[2px] h-full w-px bg-neutral-400" />
        <span className="w-[79px] text-black">7,431백만</span>
        <span className="ml-[2px] h-full w-px bg-neutral-400" />
        <span className="w-[37px] text-black">최우선</span>
        <span className="w-[43px]">1,005</span>
        <span className="w-[50px]">1,001</span>
        <span className="ml-[8px] h-full w-px bg-neutral-400" />
        <span className="w-[13px] text-black">시</span>
        <span className="w-[33px]">986</span>
        <span className="w-[27px] text-black">고</span>
        <span className="w-[41px]">1,124</span>
        <span className="w-[20px] text-black">저</span>
        <span className="w-[34px]">940</span>
      </div>
      <button className="h-[20px] w-[40px] border border-neutral-500 bg-[#f5d0cb] text-[13px]">매수</button>
      <button className="h-[20px] w-[40px] border border-neutral-500 bg-[#c5dcf4] text-[13px]">매도</button>
    </div>
  );
}

function BottomBar() {
  const raised = 'flex h-[17px] w-[17px] items-center justify-center border border-t-white border-l-white border-r-neutral-500 border-b-neutral-500 bg-[#f0f0f0]';
  return (
    <footer className="flex h-[20px] items-start bg-[#f0f0f0] pl-1 pr-1 text-neutral-600">
      <button aria-label="이전" className={raised}><Play size={8} fill="#000" className="rotate-180 text-black" /></button>
      <div className="flex h-[17px] flex-1 bg-[#f7f7f7]">
        <div className="ml-auto h-[17px] w-1/2 border border-t-white border-l-white border-b-neutral-500 border-r-neutral-500 bg-[#efefef]" />
      </div>
      <div className="flex text-black">
        <button aria-label="재생" className={raised}><Play size={8} fill="#000" /></button>
        <button aria-label="뒤로" className={raised}><Rewind size={10} fill="#000" /></button>
        <button aria-label="정지" className={raised}><Square size={8} fill="#000" /></button>
        <button aria-label="앞으로" className={raised}><FastForward size={10} fill="#000" /></button>
      </div>
      <div className="ml-[6px] w-[69px] pt-[5px]">
        <input aria-label="속도" type="range" className="block h-[3px] w-full appearance-none bg-neutral-400 [&::-webkit-slider-thumb]:h-[11px] [&::-webkit-slider-thumb]:w-[4px] [&::-webkit-slider-thumb]:appearance-none [&::-webkit-slider-thumb]:border [&::-webkit-slider-thumb]:border-neutral-500 [&::-webkit-slider-thumb]:bg-neutral-200" />
        <div className="mt-[6px] flex justify-between px-[2px]">
          {Array.from({ length: 11 }, (_, i) => <span key={i} className="h-[3px] w-px bg-black" />)}
        </div>
      </div>
      <div className="ml-2 flex h-[18px] items-center gap-[2px]">
        <button aria-label="추가 창"><Glyph d="M5 11.500H1.500v-10h10V5M6.500 6.500h8v8h-8zM10.500 6.500v8M6.500 10.500h8" /></button>
        <button aria-label="창 복사"><Glyph d="M4 9.500H1.500v-8h9V5M5.500 5.500h9v8h-9z M1.500 2.500h9M5.500 6.500h9" /></button>
        <button aria-label="영역"><Glyph d="M1 9l3-3 3 3 3-3 4 2" ><path d="M.5 1.500h14M.5 13.500h14M14.500 1v4M14.500 10v4" strokeDasharray="2 1" /></Glyph></button>
        <button aria-label="십자선" className="flex h-[18px] items-center border border-t-neutral-400 border-l-neutral-400 border-b-white border-r-white bg-white"><Glyph d="M0 3.500h15M3.500 0v15M6.500 6.500l6 6M6.500 12V6.500H12" /></button>
        <button aria-label="수평선"><Glyph d="M0 3.500h15M1 13l3-2 3-7 3 6 2-3 3 5" /></button>
        <button aria-label="수직선"><Glyph d="M4.500 0v15M1 11l3 2 4-8 3 6 1-2 3 2" /></button>
        <button aria-label="추세선"><Glyph d="M1 13L12 1M1 11l3 2 4-7 3 6 1-2 3 2" /></button>
        <button aria-label="지우기"><Glyph d="M1 8l5-6h6l-4 6zM1 8v4h6V8M7 12l5-6V2M9.500 9v5M12.500 8v6M14.500 8v6" /></button>
        <button aria-label="차트 목록"><Glyph d="M3.500 4V1.500h11v8H12M.5 4.500h11v9H.5zM2 11l2-3 2 2 2-3 2 2M6 3.500l2-1 2 1 2-1" /></button>
        <button aria-label="확대경"><Search size={15} /></button>
        <button aria-label="축소"><Minus size={15} strokeWidth={3} /></button>
        <button aria-label="확대"><Plus size={16} strokeWidth={3} /></button>
        <button aria-label="글자" className="w-[14px] text-[16px] font-bold">A</button>
      </div>
    </footer>
  );
}

export default function App() {
  return (
    <div className="flex h-screen flex-col overflow-hidden bg-black pb-[3px] pt-px font-['Liberation_Sans','Noto_Sans_CJK_KR',sans-serif] text-[12px] leading-none">
      <TitleBar />
      <div className="mx-[3px] h-[51px] shrink-0 bg-[#d1d1d1] pl-[3px] pt-[6px]">
        <Toolbar />
        <QuoteBar />
      </div>
      <main className="mx-[3px] min-h-0 flex-1">
        <Chart />
      </main>
      <div className="mx-[3px] shrink-0">
        <BottomBar />
      </div>
    </div>
  );
}
